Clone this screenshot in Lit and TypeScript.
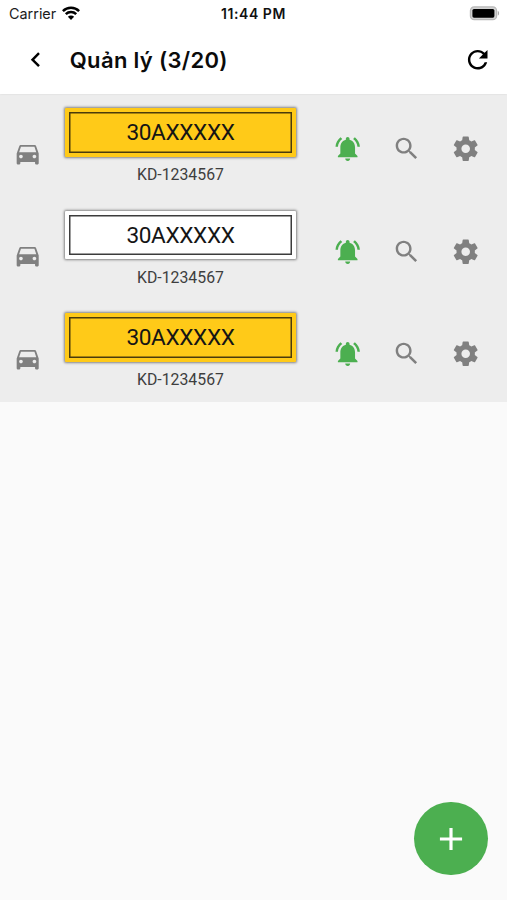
import { LitElement, html, css, svg } from "lit";
import { customElement, property } from "lit/decorators.js";

const ICONS: Record<string, string> = {
  car: "M18.92 5.01C18.72 4.42 18.16 4 17.5 4h-11c-.66 0-1.21.42-1.42 1.01L3 11v8c0 .55.45 1 1 1h1c.55 0 1-.45 1-1v-1h12v1c0 .55.45 1 1 1h1c.55 0 1-.45 1-1v-8l-2.08-5.99zM6.5 15c-.83 0-1.5-.67-1.5-1.5S5.67 12 6.5 12s1.5.67 1.5 1.5S7.33 15 6.5 15zm11 0c-.83 0-1.5-.67-1.5-1.5s.67-1.5 1.5-1.5 1.5.67 1.5 1.5-.67 1.5-1.5 1.5zM5 10l1.5-4.5h11L19 10H5z",
  bell: "M7.58 4.08L6.15 2.65C3.75 4.48 2.17 7.3 2.03 10.5h2c.15-2.65 1.51-4.97 3.55-6.42zm12.39 6.42h2c-.15-3.2-1.73-6.02-4.12-7.85l-1.42 1.43c2.02 1.45 3.39 3.77 3.54 6.42zM18 11c0-3.07-1.64-5.64-4.5-6.32V4c0-.83-.67-1.5-1.5-1.5s-1.5.67-1.5 1.5v.68C7.63 5.36 6 7.92 6 11v5l-2 2v1h16v-1l-2-2v-5zm-6 11c.14 0 .27-.01.4-.04.65-.14 1.18-.58 1.44-1.18.1-.24.15-.5.15-.78h-4c.01 1.1.9 2 2.01 2z",
  search: "M15.5 14h-.79l-.28-.27C15.41 12.59 16 11.11 16 9.5 16 5.91 13.09 3 9.5 3S3 5.91 3 9.5 5.91 16 9.5 16c1.61 0 3.09-.59 4.23-1.57l.27.28v.79l5 4.99L20.49 19l-4.99-5zm-6 0C7.01 14 5 11.99 5 9.5S7.01 5 9.5 5 14 7.01 14 9.5 11.99 14 9.5 14z",
  settings: "M19.43 12.98c.04-.32.07-.64.07-.98s-.03-.66-.07-.98l2.11-1.65c.19-.15.24-.42.12-.64l-2-3.46c-.12-.22-.39-.3-.61-.22l-2.49 1c-.52-.4-1.08-.73-1.69-.98l-.38-2.65C14.46 2.18 14.25 2 14 2h-4c-.25 0-.46.18-.49.42l-.38 2.65c-.61.25-1.17.59-1.69.98l-2.49-1c-.23-.09-.49 0-.61.22l-2 3.46c-.13.22-.07.49.12.64l2.11 1.65c-.04.32-.07.65-.07.98s.03.66.07.98l-2.11 1.65c-.19.15-.24.42-.12.64l2 3.46c.12.22.39.3.61.22l2.49-1c.52.4 1.08.73 1.69.98l.38 2.65c.03.24.24.42.49.42h4c.25 0 .46-.18.49-.42l.38-2.65c.61-.25 1.17-.59 1.69-.98l2.49 1c.23.09.49 0 .61-.22l2-3.46c.12-.22.07-.49-.12-.64l-2.11-1.65zM12 15.5c-1.93 0-3.5-1.57-3.5-3.5s1.57-3.5 3.5-3.5 3.5 1.57 3.5 3.5-1.57 3.5-3.5 3.5z",
  refresh: "M17.65 6.35C16.2 4.9 14.21 4 12 4c-4.42 0-7.99 3.58-7.99 8s3.57 8 7.99 8c3.73 0 6.84-2.55 7.73-6h-2.08c-.82 2.33-3.04 4-5.65 4-3.31 0-6-2.69-6-6s2.69-6 6-6c1.66 0 3.14.69 4.22 1.78L13 11h7V4l-2.35 2.35z",
  back: "M15.41 7.41L14 6l-6 6 6 6 1.41-1.41L10.83 12z",
  add: "M19 13h-6v6h-2v-6H5v-2h6V5h2v6h6v2z",
};

const icon = (name: string) => html`<svg class="icon" viewBox="0 0 24 24">${svg`<path d=${ICONS[name]} />`}</svg>`;

@customElement("status-bar")
class StatusBar extends LitElement {
  static styles = css`
    :host {
      display: grid;
      grid-template-columns: 1fr auto 1fr;
      align-items: center;
      height: 27px;
      padding: 0 7px 0 9px;
      font: 14.4px/27px Inter, sans-serif;
      color: #1c1c1c;
    }
    .carrier { display: flex; align-items: center; gap: 6px; }
    .time { margin-right: 2px; font-weight: 600; font-size: 14px; letter-spacing: 0.55px; color: #111; }
    .wifi { width: 18px; height: 14px; margin-top: -2px; }
    .battery { width: 31px; height: 15px; justify-self: end; }
  `;
  render() {
    return html`
      <div class="carrier">
        <span>Carrier</span>
        <svg class="wifi" viewBox="0 0 18 14">
          <g fill="none" stroke="#000" stroke-width="2.5">
            <path d="M.9 5.1a11.5 11.5 0 0 1 16.2 0" />
            <path d="M3.8 8.2a7.4 7.4 0 0 1 10.4 0" />
          </g>
          <path d="M9 14 5.9 10.8a4.4 4.4 0 0 1 6.2 0z" />
        </svg>
      </div>
      <span class="time">11:44 PM</span>
      <svg class="battery" viewBox="0 0 31 15">
        <rect x="1.4" y=".9" width="26.2" height="12.8" rx="3.8" fill="#d2d2d2" stroke="#b8b8b8" stroke-width="1.2" />
        <rect x="3.4" y="2.9" width="22" height="8.8" rx="1.6" />
        <path d="M28.8 5c1.7.5 1.7 4.1 0 4.6z" fill="#aaa" />
      </svg>
    `;
  }
}

@customElement("vehicle-row")
class VehicleRow extends LitElement {
  @property() plate = "";
  @property() code = "";
  @property() kind = "yellow";

  static styles = css`
    :host {
      display: grid;
      grid-template-columns: 65px 231px 1fr;
      box-sizing: border-box;
      height: 102.5px;
      padding-top: 14px;
      background: #ededed;
      font-family: Roboto, sans-serif;
    }
    .icon { display: block; width: 29.4px; height: 29.4px; fill: #808080; }
    .lead { padding: 31.5px 0 0 13.4px; }
    .info { display: flex; flex-direction: column; align-items: center; }
    .plate {
      box-sizing: border-box;
      width: 231px;
      height: 48.6px;
      padding: 4px;
      border-radius: 1px;
      background: #fff;
      box-shadow: 0 0 2.5px 1px #848484;
    }
    .plate.yellow { background: #ffca18; }
    .number {
      height: 40.6px;
      box-shadow: inset 0 0 0 1.5px #3c3c3c;
      text-align: center;
      font-size: 22.6px;
      line-height: 41px;
      letter-spacing: -0.35px;
      color: #151515;
    }
    .yellow .number { box-shadow: inset 0 0 0 1.5px #4a3b0b; }
    .code { margin-top: 9.8px; font-size: 15.8px; line-height: 18px; color: #3e3e3e; }
    .actions { display: flex; gap: 29.3px; padding: 26px 0 0 37.3px; }
    .active .icon { fill: #4caf50; }
  `;
  render() {
    return html`
      <div class="lead">${icon("car")}</div>
      <div class="info">
        <div class="plate ${this.kind}"><div class="number">${this.plate}</div></div>
        <div class="code">${this.code}</div>
      </div>
      <div class="actions">
        <span class="active">${icon("bell")}</span>
        <span>${icon("search")}</span>
        <span>${icon("settings")}</span>
      </div>
    `;
  }
}

@customElement("app-root")
class AppRoot extends LitElement {
  static styles = css`
    :host {
      display: flex;
      flex-direction: column;
      position: relative;
      height: 900px;
      overflow: hidden;
      background: #fafafa;
    }
    .top { position: relative; height: 94px; background: #fff; box-shadow: 0 0 2px rgba(0, 0, 0, 0.1); }
    .bar { display: flex; align-items: center; height: 66px; padding: 0 14.5px 0 20.8px; }
    .icon { display: block; width: 29.4px; height: 29.4px; }
    .title {
      flex: 1;
      margin: 0 0 0 19.6px;
      font: 600 22px/30px Inter, "Noto Sans", sans-serif;
      letter-spacing: 0.33px;
      color: #0b0b0b;
    }
    .fab {
      position: absolute;
      right: 19.5px;
      bottom: 24.6px;
      display: grid;
      place-items: center;
      width: 73.5px;
      height: 73.5px;
      padding: 0;
      border: 0;
      border-radius: 50%;
      background: #4caf50;
    }
    .fab .icon { width: 38px; height: 38px; fill: #fff; }
  `;
  private vehicles = [
    { plate: "30AXXXXX", code: "KD-1234567", kind: "yellow" },
    { plate: "30AXXXXX", code: "KD-1234567", kind: "white" },
    { plate: "30AXXXXX", code: "KD-1234567", kind: "yellow" },
  ];
  render() {
    return html`
      <header class="top">
        <status-bar></status-bar>
        <div class="bar">
          ${icon("back")}
          <h1 class="title">Quản lý (3/20)</h1>
          ${icon("refresh")}
        </div>
      </header>
      <main>
        ${this.vehicles.map(
          (v) => html`<vehicle-row .plate=${v.plate} .code=${v.code} .kind=${v.kind}></vehicle-row>`
        )}
      </main>
      <button class="fab" aria-label="Thêm">${icon("add")}</button>
    `;
  }
}
